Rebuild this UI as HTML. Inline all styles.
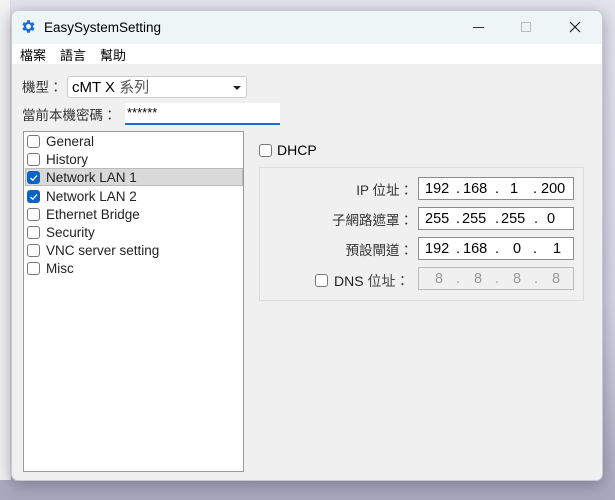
<!DOCTYPE html>
<html><head><meta charset="utf-8"><style>
*{margin:0;padding:0;box-sizing:border-box}
body{width:615px;height:500px;overflow:hidden;position:relative;background:linear-gradient(#e4e4ee 0%,#d6d6e6 60%,#a8a8bc 100%);font-family:"Liberation Sans","Noto Sans CJK TC",sans-serif;font-size:13px;color:#000}
.abs{position:absolute}
.bgwin{left:0;top:0;width:11px;height:480px;background:#f3f3f3;border-right:1px solid #ddd}
.win{left:11px;top:10px;width:592px;height:471px;background:#f0f0f0;border-radius:7px;overflow:hidden;box-shadow:0 4px 16px rgba(60,60,90,.45);border:1px solid #c8c8d0}
.title{left:0;top:0;width:100%;height:33px;background:#eef5f5}
.menu{left:0;top:33px;width:100%;height:20px;background:#fff}
.cb{width:13px;height:13px;border:1px solid #777;border-radius:3px;background:#fff}
.cb.on{background:#0a64c8;border-color:#0a64c8}
.lb{font-size:13.5px;color:#333;line-height:18px}
.field{background:#fff;border:1px solid #8c8c8c;height:23px;width:156px;font-size:14.5px}
.field span{position:absolute;top:2px;line-height:18px}
</style></head><body>
<div class="abs bgwin"></div>
<div class="abs win">
 <div class="abs title">
  <svg class="abs" style="left:8px;top:7px" width="17" height="17" viewBox="0 0 24 24"><path fill="#1a6fd6" d="M19.4 13a7.5 7.5 0 0 0 0-2l2.1-1.6-2-3.5-2.5 1a7.4 7.4 0 0 0-1.700-1L15 3.2h-4l-.4 2.7a7.4 7.4 0 0 0-1.7 1l-2.5-1-2 3.5L6.5 11a7.5 7.5 0 0 0 0 2l-2.1 1.6 2 3.5 2.5-1a7.4 7.4 0 0 0 1.7 1l.4 2.7h4l.4-2.7a7.4 7.4 0 0 0 1.7-1l2.5 1 2-3.5zM13 15.5a3.5 3.5 0 1 1 0-7 3.5 3.5 0 0 1 0 7z" transform="translate(-1 0)"/></svg>
  <div class="abs" style="left:32px;top:9px;font-size:13.5px">EasySystemSetting</div>
  <div class="abs" style="left:461px;top:16px;width:11px;height:1px;background:#333"></div>
  <div class="abs" style="left:509px;top:11px;width:10px;height:10px;border:1px solid #bbb"></div>
  <svg class="abs" style="left:557px;top:10px" width="12" height="12"><path d="M1 1L11 11M11 1L1 11" stroke="#222" stroke-width="1.2"/></svg>
 </div>
 <div class="abs menu"><span class="abs" style="left:8px;top:1px">檔案</span><span class="abs" style="left:48px;top:1px">語言</span><span class="abs" style="left:88px;top:1px">幫助</span></div>
 <div class="abs lb" style="left:10px;top:68px">機型：</div>
 <div class="abs" style="left:55px;top:65px;width:180px;height:22px;background:#fff;border:1px solid #ccc;border-radius:3px;font-size:15px"><span class="abs" style="left:4px;top:2px;line-height:18px">cMT X <span style="color:#555">系列</span></span><span class="abs" style="right:5px;top:9px;width:0;height:0;border-left:4px solid transparent;border-right:4px solid transparent;border-top:4px solid #222"></span></div>
 <div class="abs lb" style="left:10px;top:96px">當前本機密碼：</div>
 <div class="abs" style="left:113px;top:92px;width:155px;height:22px;background:#fff;border-bottom:2px solid #1a6fd6"><span class="abs" style="left:2px;top:2px;font-size:13px">******</span></div>
 <div class="abs" style="left:11px;top:120px;width:221px;height:341px;background:#fff;border:1px solid #999">
  <div class="abs" style="left:1px;top:36px;width:218px;height:18px;background:#d9d9d9;border:1px solid #bbb"></div>
  <div style="position:absolute;left:3px;top:1px;font-size:13.5px;line-height:18.2px;color:#222">
   <div style="position:relative;padding-left:19px"><span class="abs cb" style="left:0;top:2px"></span>General</div>
   <div style="position:relative;padding-left:19px"><span class="abs cb" style="left:0;top:2px"></span>History</div>
   <div style="position:relative;padding-left:19px"><span class="abs cb on" style="left:0;top:2px"><svg width="11" height="11" style="position:absolute;left:0;top:0"><path d="M2.5 6L4.8 8.2 9 3.5" stroke="#fff" stroke-width="1.3" fill="none"/></svg></span>Network LAN 1</div>
   <div style="position:relative;padding-left:19px"><span class="abs cb on" style="left:0;top:2px"><svg width="11" height="11" style="position:absolute;left:0;top:0"><path d="M2.5 6L4.8 8.2 9 3.5" stroke="#fff" stroke-width="1.3" fill="none"/></svg></span>Network LAN 2</div>
   <div style="position:relative;padding-left:19px"><span class="abs cb" style="left:0;top:2px"></span>Ethernet Bridge</div>
   <div style="position:relative;padding-left:19px"><span class="abs cb" style="left:0;top:2px"></span>Security</div>
   <div style="position:relative;padding-left:19px"><span class="abs cb" style="left:0;top:2px"></span>VNC server setting</div>
   <div style="position:relative;padding-left:19px"><span class="abs cb" style="left:0;top:2px"></span>Misc</div>
  </div>
 </div>
 <span class="abs cb" style="left:247px;top:133px"></span>
 <div class="abs" style="left:265px;top:131px;font-size:14px">DHCP</div>
 <div class="abs" style="left:247px;top:156px;width:325px;height:134px;border:1px solid #dcdcdc"></div>
 <div class="abs lb" style="left:300px;top:171px;width:101px;text-align:right">IP 位址：</div>
 <div class="abs field" style="left:406px;top:166px"><span style="left:6px">192</span><span style="left:37px">.</span><span style="left:44px">168</span><span style="left:76px">.</span><span style="left:91px">1</span><span style="left:114px">.</span><span style="left:122px">200</span></div>
 <div class="abs lb" style="left:300px;top:201px;width:101px;text-align:right">子網路遮罩：</div>
 <div class="abs field" style="left:406px;top:196px"><span style="left:6px">255</span><span style="left:37px">.</span><span style="left:43px">255</span><span style="left:76px">.</span><span style="left:82px">255</span><span style="left:115px">.</span><span style="left:128px">0</span></div>
 <div class="abs lb" style="left:300px;top:231px;width:101px;text-align:right">預設閘道：</div>
 <div class="abs field" style="left:406px;top:226px"><span style="left:6px">192</span><span style="left:37px">.</span><span style="left:44px">168</span><span style="left:76px">.</span><span style="left:94px">0</span><span style="left:114px">.</span><span style="left:134px">1</span></div>
 <span class="abs cb" style="left:303px;top:263px"></span>
 <div class="abs" style="left:322px;top:261px;font-size:14px;line-height:18px;color:#222">DNS <span style="color:#444">位址：</span></div>
 <div class="abs field" style="left:406px;top:256px;background:#f0f0f0;border-color:#bbb;color:#999"><span style="left:16px">8</span><span style="left:37px">.</span><span style="left:55px">8</span><span style="left:76px">.</span><span style="left:94px">8</span><span style="left:115px">.</span><span style="left:133px">8</span></div>
</div>
</body></html>
